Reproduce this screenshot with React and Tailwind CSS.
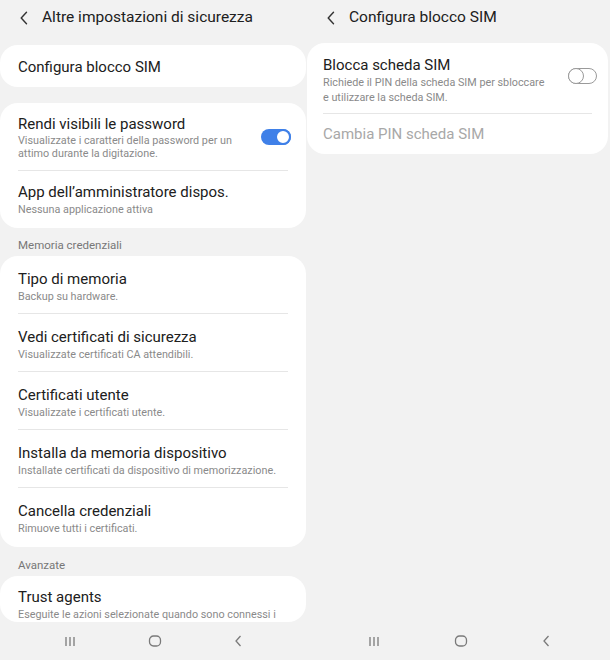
import React from "react";

const font = { fontFamily: 'Roboto, "Noto Sans", "Liberation Sans", sans-serif' };

function Chevron() {
  return (
    <svg width="8" height="14" viewBox="0 0 8 14">
      <path d="M6.5 1.2 L1.2 7 L6.5 12.8" fill="none" stroke="#333" strokeWidth="1.4" strokeLinecap="round" strokeLinejoin="round" />
    </svg>
  );
}

function ToggleOn() {
  return (
    <div className="relative w-[30px] h-[16px] rounded-full bg-[#3f80e8]">
      <div className="absolute right-0 top-0 w-[16px] h-[16px] rounded-full bg-white border-[2px] border-[#3f80e8]" />
    </div>
  );
}

function ToggleOff() {
  return (
    <div className="relative w-[29px] h-[16px] rounded-full border border-[#9a9a9a] bg-white">
      <div className="absolute left-[-1px] top-[-1px] w-[16px] h-[16px] rounded-full border border-[#9a9a9a] bg-white" />
    </div>
  );
}

function Item({ title, sub, last, toggle, pt = "pt-[13px]", pb = "pb-[10px]", subMt = "mt-[1px]" }) {
  return (
    <div className="px-[18px]">
      <div className={`${pt} ${pb} flex items-center ${last ? "" : "border-b border-[#e6e6e6]"}`}>
        <div className="flex-1">
          <div className="text-[15px] leading-[20px] text-[#202020]">{title}</div>
          {sub && <div className={`text-[10.8px] leading-[13px] text-[#8a8a8a] ${subMt}`}>{sub}</div>}
        </div>
        {toggle}
      </div>
    </div>
  );
}

function NavBar({ gap }) {
  return (
    <div className={`h-[38px] flex items-center justify-center ${gap}`}>
      <svg width="12" height="11" viewBox="0 0 12 11">
        <path d="M2 1 V10 M6 1 V10 M10 1 V10" stroke="#7a7a7a" strokeWidth="1.3" />
      </svg>
      <svg width="14" height="12" viewBox="0 0 14 12">
        <rect x="1.5" y="1" width="11" height="10" rx="4" fill="none" stroke="#7a7a7a" strokeWidth="1.3" />
      </svg>
      <svg width="8" height="12" viewBox="0 0 8 12">
        <path d="M6.5 1 L2 6 L6.5 11" fill="none" stroke="#7a7a7a" strokeWidth="1.3" />
      </svg>
    </div>
  );
}

export default function App() {
  return (
    <div style={font} className="w-[610px] h-[660px] bg-[#f2f2f2] flex overflow-hidden">
      {/* Left panel */}
      <div className="w-[306px] flex flex-col">
        <div className="h-[36px] shrink-0 flex items-center pl-[20px]">
          <Chevron />
          <span className="ml-[14px] text-[15.5px] text-[#202020]">Altre impostazioni di sicurezza</span>
        </div>
        <div className="mt-[9px] shrink-0 bg-white rounded-[18px] h-[42px] flex items-center px-[18px] pt-[2px]">
          <span className="text-[15px] text-[#202020]">Configura blocco SIM</span>
        </div>
        <div className="mt-[16px] shrink-0 bg-white rounded-[18px]">
          <Item
            pt="pt-[11px]"
            pb="pb-[10px]"
            subMt="mt-0"
            title="Rendi visibili le password"
            sub={<>Visualizzate i caratteri della password per un<br />attimo durante la digitazione.</>}
            toggle={<div className="ml-[8px] mr-[-3px] mt-[-1px]"><ToggleOn /></div>}
          />
          <Item pt="pt-[11px]" pb="pb-[12px]" title="App dell’amministratore dispos." sub="Nessuna applicazione attiva" last />
        </div>
        <div className="h-[28px] shrink-0 pl-[18px] pt-[10px] text-[11.5px] leading-[15px] text-[#777]">Memoria credenziali</div>
        <div className="shrink-0 bg-white rounded-[18px]">
          <Item title="Tipo di memoria" sub="Backup su hardware." />
          <Item title="Vedi certificati di sicurezza" sub="Visualizzate certificati CA attendibili." />
          <Item title="Certificati utente" sub="Visualizzate i certificati utente." />
          <Item title="Installa da memoria dispositivo" sub="Installate certificati da dispositivo di memorizzazione." />
          <Item title="Cancella credenziali" sub="Rimuove tutti i certificati." last pb="pb-[12px]" />
        </div>
        <div className="h-[29px] shrink-0 pl-[18px] pt-[11px] text-[11.5px] leading-[15px] text-[#777]">Avanzate</div>
        <div className="shrink-0 bg-white rounded-[18px] h-[46px] overflow-hidden px-[18px] pt-[11px]">
          <div className="text-[15px] leading-[20px] text-[#202020]">Trust agents</div>
          <div className="text-[10.8px] leading-[13px] text-[#8a8a8a] mt-[1px] whitespace-nowrap">
            Eseguite le azioni selezionate quando sono connessi i<br />dispositivi attendibili.
          </div>
        </div>
        <div className="flex-1" />
        <NavBar gap="gap-[72px]" />
      </div>

      {/* Right panel */}
      <div className="ml-[1px] w-[303px] flex flex-col">
        <div className="h-[35px] flex items-center pl-[20px]">
          <Chevron />
          <span className="ml-[14px] text-[15.5px] text-[#202020]">Configura blocco SIM</span>
        </div>
        <div className="mt-[8px] mr-[2px] bg-white rounded-[18px]">
          <div className="px-[16px]">
            <div className="pt-[12px] pb-[8px] flex items-center border-b border-[#e6e6e6]">
              <div className="flex-1">
                <div className="text-[15px] leading-[20px] text-[#202020]">Blocca scheda SIM</div>
                <div className="text-[10.8px] leading-[15px] text-[#8a8a8a]">
                  Richiede il PIN della scheda SIM per sbloccare<br />e utilizzare la scheda SIM.
                </div>
              </div>
              <div className="mr-[-5px] mt-[-8px]"><ToggleOff /></div>
            </div>
            <div className="h-[40px] flex items-center text-[15px] text-[#a8a8a8]">Cambia PIN scheda SIM</div>
          </div>
        </div>
        <div className="flex-1" />
        <NavBar gap="gap-[74px]" />
      </div>
    </div>
  );
}
